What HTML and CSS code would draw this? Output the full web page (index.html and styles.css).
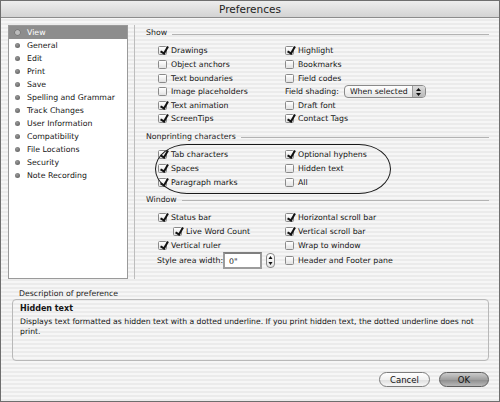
FILE: index.html
```html
<!DOCTYPE html>
<html>
<head>
<meta charset="utf-8">
<title>Preferences</title>
<link rel="stylesheet" href="styles.css">
</head>
<body>
<div class="window">
  <div class="titlebar">Preferences</div>
  <div class="main">
    <ul class="list">
      <li class="sel"><span class="dot"></span>View</li>
      <li><span class="dot"></span>General</li>
      <li><span class="dot"></span>Edit</li>
      <li><span class="dot"></span>Print</li>
      <li><span class="dot"></span>Save</li>
      <li><span class="dot"></span>Spelling and Grammar</li>
      <li><span class="dot"></span>Track Changes</li>
      <li><span class="dot"></span>User Information</li>
      <li><span class="dot"></span>Compatibility</li>
      <li><span class="dot"></span>File Locations</li>
      <li><span class="dot"></span>Security</li>
      <li><span class="dot"></span>Note Recording</li>
    </ul>
    <div class="split"></div>
    <div class="panel">
      <section class="group">
        <div class="ghead">Show</div>
        <div class="grid">
          <div class="col">
            <div class="opt on"><i class="cb"></i>Drawings</div>
            <div class="opt"><i class="cb"></i>Object anchors</div>
            <div class="opt"><i class="cb"></i>Text boundaries</div>
            <div class="opt"><i class="cb"></i>Image placeholders</div>
            <div class="opt on"><i class="cb"></i>Text animation</div>
            <div class="opt on"><i class="cb"></i>ScreenTips</div>
          </div>
          <div class="col">
            <div class="opt on"><i class="cb"></i>Highlight</div>
            <div class="opt"><i class="cb"></i>Bookmarks</div>
            <div class="opt"><i class="cb"></i>Field codes</div>
            <div class="opt"><span class="flabel">Field shading:</span><span class="popup">When selected<span class="parr"><svg width="5" height="8" viewBox="0 0 5 8"><path d="M2.5 0 L5 3 L0 3 Z M0 5 L5 5 L2.5 8 Z" fill="#111"/></svg></span></span></div>
            <div class="opt"><i class="cb"></i>Draft font</div>
            <div class="opt on"><i class="cb"></i>Contact Tags</div>
          </div>
        </div>
      </section>
      <section class="group g2">
        <div class="ghead">Nonprinting characters</div>
        <div class="grid">
          <div class="col">
            <div class="opt on"><i class="cb"></i>Tab characters</div>
            <div class="opt on"><i class="cb"></i>Spaces</div>
            <div class="opt on"><i class="cb"></i>Paragraph marks</div>
          </div>
          <div class="col">
            <div class="opt on"><i class="cb"></i>Optional hyphens</div>
            <div class="opt"><i class="cb"></i>Hidden text</div>
            <div class="opt"><i class="cb"></i>All</div>
          </div>
        </div>
        <div class="oval"></div>
      </section>
      <section class="group g3">
        <div class="ghead">Window</div>
        <div class="grid">
          <div class="col">
            <div class="opt on"><i class="cb"></i>Status bar</div>
            <div class="opt on sub"><i class="cb"></i>Live Word Count</div>
            <div class="opt on"><i class="cb"></i>Vertical ruler</div>
            <div class="opt tall"><span class="slabel">Style area width:</span><span class="field">0"</span><span class="stepper"><svg width="5" height="11" viewBox="0 0 5 11"><path d="M2.5 1 L4.5 4 L0.5 4 Z M0.5 7 L4.5 7 L2.5 10 Z" fill="#111"/></svg></span></div>
          </div>
          <div class="col">
            <div class="opt on"><i class="cb"></i>Horizontal scroll bar</div>
            <div class="opt on"><i class="cb"></i>Vertical scroll bar</div>
            <div class="opt"><i class="cb"></i>Wrap to window</div>
            <div class="opt tall"><i class="cb"></i>Header and Footer pane</div>
          </div>
        </div>
      </section>
    </div>
  </div>
  <div class="desc">
    <div class="dlabel">Description of preference</div>
    <div class="dbox">
      <b>Hidden text</b>
      <p>Displays text formatted as hidden text with a dotted underline. If you print hidden text, the dotted underline does not print.</p>
    </div>
  </div>
  <div class="buttons">
    <button class="btn">Cancel</button>
    <button class="btn ok">OK</button>
  </div>
</div>
</body>
</html>
```

FILE: styles.css
```css
* { box-sizing: border-box; margin: 0; padding: 0; }
html, body { width: 500px; height: 402px; overflow: hidden; }
body {
  font-family: "DejaVu Sans", sans-serif;
  font-size: 7.8px;
  color: #151515;
  background: #fff;
}
.window {
  width: 500px;
  height: 402px;
  border: 1px solid #6e6e6e;
  background: repeating-linear-gradient(to bottom, #f6f6f6 0 2px, #ebebeb 2px 4px);
  display: flex;
  flex-direction: column;
}
.titlebar {
  height: 17px;
  flex: none;
  border-bottom: 1px solid #8c8c8c;
  background: linear-gradient(#ededed, #d3d3d3);
  text-align: center;
  font-size: 10.5px;
  line-height: 16px;
  color: #222;
}
.main {
  display: flex;
  padding: 7px 0 0 7px;
  height: 261px;
  flex: none;
}
.list {
  width: 120px;
  height: 254px;
  flex: none;
  background: #fff;
  border: 1px solid #9a9a9a;
  list-style: none;
}
.list li {
  display: flex;
  align-items: center;
  height: 13px;
  white-space: nowrap;
}
.dot {
  width: 5px;
  height: 5px;
  border-radius: 50%;
  background: radial-gradient(circle at 40% 35%, #9a9a9a, #555);
  margin: 0 7px 0 6px;
  flex: none;
}
.list li.sel {
  background: #8d8d8d;
  color: #fff;
}
.list li.sel .dot {
  background: #bdbdbd;
  box-shadow: 0 0 0 0.5px #6a6a6a;
}
.split {
  width: 1px;
  height: 254px;
  background: #bdbdbd;
  margin-left: 6px;
  flex: none;
}
.panel {
  flex: 1;
  padding: 2px 10px 0 11px;
}
.group { position: relative; }
.g2 { margin-top: 5.2px; }
.g3 { margin-top: 5px; }
.ghead {
  display: flex;
  align-items: center;
  height: 12px;
  line-height: 12px;
  color: #222;
  white-space: nowrap;
}
.ghead::after {
  content: "";
  flex: 1;
  height: 1px;
  background: #b3b3b3;
  margin: 2px 0 0 5px;
}
.grid {
  display: grid;
  grid-template-columns: 127px 1fr;
  padding-left: 12px;
  margin-top: 5.2px;
}
.opt {
  display: flex;
  align-items: center;
  height: 13.6px;
  white-space: nowrap;
}
.opt.tall { height: 17px; }
.opt.sub { padding-left: 15px; }
.cb {
  width: 9px;
  height: 9px;
  flex: none;
  position: relative;
  border: 1px solid #8a8a8a;
  border-radius: 1.5px;
  background: linear-gradient(#fff, #e2e2e2);
  margin-right: 4px;
}
.on .cb::after {
  content: "";
  position: absolute;
  left: 2.5px;
  top: -2px;
  width: 2.5px;
  height: 7px;
  border: solid #111;
  border-width: 0 2px 2px 0;
  transform: rotate(30deg);
}
.flabel { margin-right: 5px; }
.popup {
  position: relative;
  width: 82px;
  height: 13px;
  display: flex;
  align-items: center;
  padding-left: 5px;
  border: 1px solid #8a8a8a;
  border-radius: 4px;
  background: linear-gradient(#fff, #e6e6e6);
}
.parr {
  position: absolute;
  right: 0;
  top: 0;
  bottom: 0;
  width: 13px;
  display: flex;
  align-items: center;
  justify-content: center;
  border-left: 1px solid #9a9a9a;
  border-radius: 0 3px 3px 0;
  background: linear-gradient(#dcdcdc, #b9b9b9);
}
.slabel { width: 66px; margin-left: -1px; }
.field {
  width: 39px;
  height: 17px;
  padding: 2px 0 0 4px;
  border: 2px solid #9c9c9c;
  border-top-color: #7f7f7f;
  background: #fff;
  line-height: 11px;
}
.stepper {
  width: 9px;
  height: 15px;
  margin-left: 4px;
  display: flex;
  align-items: center;
  justify-content: center;
  border: 1px solid #8a8a8a;
  border-radius: 4px;
  background: linear-gradient(#fff, #e4e4e4);
}
.oval {
  position: absolute;
  left: 9px;
  top: 13px;
  width: 236px;
  height: 50px;
  border: 1.5px solid #1a1a1a;
  border-radius: 32px / 25px;
}
.desc {
  padding: 10px 10px 0 11px;
  flex: none;
}
.dlabel {
  line-height: 10px;
  padding-left: 7px;
  color: #222;
}
.dbox {
  height: 62px;
  padding: 4px 7px;
  border: 1px solid #b8b8b8;
  border-radius: 4px;
}
.dbox b {
  display: block;
  line-height: 10px;
  font-size: 8px;
}
.dbox p {
  margin-top: 3px;
  line-height: 10px;
  font-size: 7.7px;
}
.buttons {
  display: flex;
  justify-content: flex-end;
  gap: 9px;
  padding-right: 10px;
  margin-top: 11px;
}
.btn {
  width: 51px;
  height: 15px;
  border-radius: 8px;
  border: 1px solid #7d7d7d;
  background: linear-gradient(#fff, #f1f1f1 50%, #dedede 51%, #f6f6f6);
  font: 8.5px "DejaVu Sans", sans-serif;
  color: #111;
}
.btn.ok {
  width: 50px;
  border-color: #5e5e5e;
  background: linear-gradient(#cbcbcb, #a0a0a0 50%, #8c8c8c 51%, #b8b8b8);
}
```
